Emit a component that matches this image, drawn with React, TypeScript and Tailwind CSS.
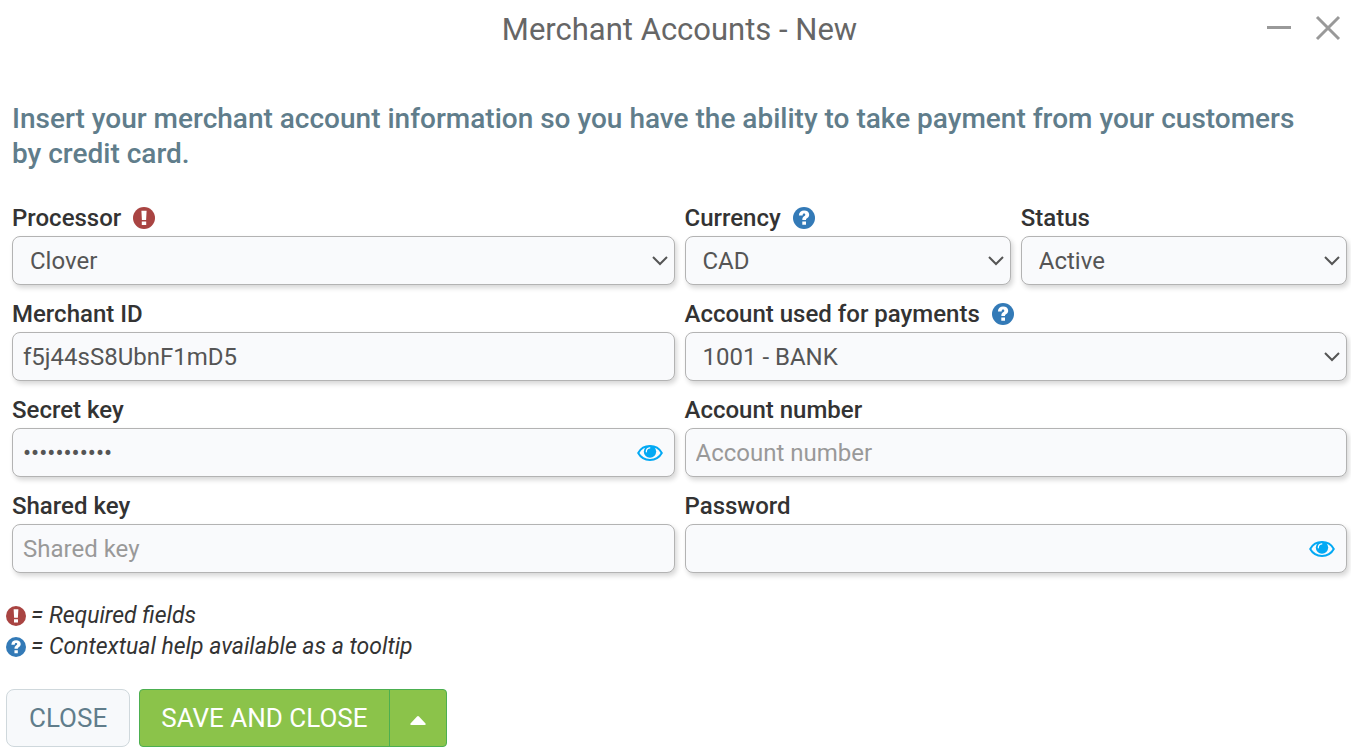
import { useState } from "react";
import type { ReactNode } from "react";

const controlClass =
  "block h-[49px] w-full rounded-lg border border-[#b3b3b3] bg-[#f9fafc] text-2xl text-[#555] shadow-[2px_3px_5px_rgba(0,0,0,0.16)] outline-none placeholder:text-[#999] placeholder:opacity-100";

function RequiredIcon({ className }: { className: string }) {
  return (
    <svg viewBox="0 0 22 22" className={className} aria-hidden="true">
      <circle cx="11" cy="11" r="11" fill="#a94442" />
      <path d="M8.4 3.7h5.200l-.5 9.300H8.900z M8.800 14.600h4.400v3.500H8.800z" fill="#fff" />
    </svg>
  );
}

function HelpIcon({ className }: { className: string }) {
  return (
    <svg viewBox="0 0 22 22" className={className} aria-hidden="true">
      <circle cx="11" cy="11" r="11" fill="#337ab7" />
      <path
        d="M5.900 8.400C6 5.200 8.200 3.600 11.100 3.600c3 0 5.100 1.600 5.100 4.100 0 1.600-.8 2.500-1.900 3.300-.9.600-1.300 1-1.300 2H9.300c0-1.900.5-2.800 1.700-3.700.9-.6 1.300-.9 1.300-1.600s-.5-1.100-1.200-1.100c-.9 0-1.400.5-1.500 1.800z M9.300 14.500h3.700v3.300H9.300z"
        fill="#fff"
      />
    </svg>
  );
}

function EyeIcon() {
  return (
    <svg viewBox="0 0 26 16" className="h-4 w-[26px]" aria-hidden="true">
      <path
        d="M1.200 8C3.700 3.500 8 1.100 13 1.100s9.300 2.400 11.800 6.900c-2.500 4.500-6.800 6.900-11.800 6.900S3.700 12.500 1.200 8z"
        fill="none"
        stroke="#03a9f4"
        strokeWidth="2"
        strokeLinejoin="round"
      />
      <circle cx="13" cy="6.600" r="6.200" fill="#03a9f4" />
      <path d="M9.300 6.800c0-2.300 1.200-3.800 3.500-4" fill="none" stroke="#fff" strokeWidth="1.200" strokeLinecap="round" />
    </svg>
  );
}

type FieldProps = { id: string; label: string; icon?: ReactNode; wide?: boolean; children: ReactNode };

function Field({ id, label, icon, wide = true, children }: FieldProps) {
  return (
    <div className={wide ? "col-span-2" : "col-span-1"}>
      <label htmlFor={id} className="flex h-9 items-center gap-3 text-2xl font-medium text-[#333]">
        {label}
        {icon}
      </label>
      {children}
    </div>
  );
}

function Select({ id, options }: { id: string; options: string[] }) {
  return (
    <div className="relative">
      <select id={id} className={`${controlClass} appearance-none pr-10 pl-[17px]`}>
        {options.map((option) => (
          <option key={option}>{option}</option>
        ))}
      </select>
      <svg
        viewBox="0 0 16 10"
        className="pointer-events-none absolute top-5 right-[7px] h-[10px] w-4"
        fill="none"
        stroke="#555"
        strokeWidth="2"
        aria-hidden="true"
      >
        <path d="M1 1l7 7 7-7" />
      </svg>
    </div>
  );
}

function SecretInput({ id, initial = "" }: { id: string; initial?: string }) {
  const [visible, setVisible] = useState(false);
  return (
    <div className="relative">
      <input
        id={id}
        type={visible ? "text" : "password"}
        defaultValue={initial}
        className={`${controlClass} pr-12 pl-[10px]`}
      />
      <button
        type="button"
        aria-label="Show value"
        onClick={() => setVisible(!visible)}
        className="absolute inset-y-0 right-3 flex items-center"
      >
        <EyeIcon />
      </button>
    </div>
  );
}

export default function App() {
  return (
    <main className="bg-white font-['Roboto',sans-serif] text-[#333]">
      <header className="grid h-[60px] grid-cols-[1fr_auto_1fr] items-center pr-2 pl-4">
        <h1 className="col-start-2 text-[31px] leading-[60px] text-[#666]">Merchant Accounts - New</h1>
        <div className="flex items-center justify-end gap-[22px] pb-1">
          <button type="button" aria-label="Minimize">
            <svg viewBox="0 0 28 26" className="h-[26px] w-7" stroke="#999" strokeWidth="3" aria-hidden="true">
              <path d="M2 12.500h24" />
            </svg>
          </button>
          <button type="button" aria-label="Close window">
            <svg viewBox="0 0 28 26" className="h-[26px] w-7" stroke="#999" strokeWidth="3" aria-hidden="true">
              <path d="M2 2l22 22M24 2L2 24" />
            </svg>
          </button>
        </div>
      </header>

      <form onSubmit={(event) => event.preventDefault()}>
        <p className="pt-[41px] pr-12 pl-3 text-[28px] leading-[35px] font-medium text-[#607d8b]">
          Insert your merchant account information so you have the ability to take payment from your customers by
          credit card.
        </p>

        <div className="mt-[29px] grid grid-cols-4 gap-x-[10px] gap-y-[11px] pr-1 pl-3">
          <Field id="processor" label="Processor" icon={<RequiredIcon className="size-[22px]" />}>
            <Select id="processor" options={["Clover"]} />
          </Field>
          <Field id="currency" label="Currency" icon={<HelpIcon className="size-[22px]" />} wide={false}>
            <Select id="currency" options={["CAD"]} />
          </Field>
          <Field id="status" label="Status" wide={false}>
            <Select id="status" options={["Active"]} />
          </Field>
          <Field id="merchant-id" label="Merchant ID">
            <input id="merchant-id" defaultValue="f5j44sS8UbnF1mD5" className={`${controlClass} px-[10px]`} />
          </Field>
          <Field id="account" label="Account used for payments" icon={<HelpIcon className="size-[22px]" />}>
            <Select id="account" options={["1001 - BANK"]} />
          </Field>
          <Field id="secret-key" label="Secret key">
            <SecretInput id="secret-key" initial="12345678901" />
          </Field>
          <Field id="account-number" label="Account number">
            <input id="account-number" placeholder="Account number" className={`${controlClass} px-[10px]`} />
          </Field>
          <Field id="shared-key" label="Shared key">
            <input id="shared-key" placeholder="Shared key" className={`${controlClass} px-[10px]`} />
          </Field>
          <Field id="password" label="Password">
            <SecretInput id="password" />
          </Field>
        </div>

        <div className="mt-[27px] px-[6px] text-[23px] leading-[31px] italic">
          <p className="flex items-center gap-[5px]">
            <RequiredIcon className="size-5" />= Required fields
          </p>
          <p className="flex items-center gap-[5px]">
            <HelpIcon className="size-5" />= Contextual help available as a tooltip
          </p>
        </div>

        <div className="mt-[27px] flex h-[58px] gap-[9px] px-[6px] text-[26px]">
          <button type="button" className="rounded-lg border border-[#cfd8dc] bg-[#f7f9fb] px-[22px] text-[#607d8b]">
            CLOSE
          </button>
          <div className="flex rounded border border-[#4caf50] bg-[#8bc34a] text-white">
            <button type="submit" className="px-[21px]">
              SAVE AND CLOSE
            </button>
            <button
              type="button"
              aria-label="More save options"
              className="flex w-[57px] items-center justify-center border-l border-[#4caf50]"
            >
              <svg viewBox="0 0 16 9" className="mt-1 h-[9px] w-4" fill="#fff" aria-hidden="true">
                <path d="M7 .5q1-1 2 0l6.500 7q.8 1.500-1 1.500h-13q-1.800 0-1-1.500z" />
              </svg>
            </button>
          </div>
        </div>
      </form>
    </main>
  );
}
